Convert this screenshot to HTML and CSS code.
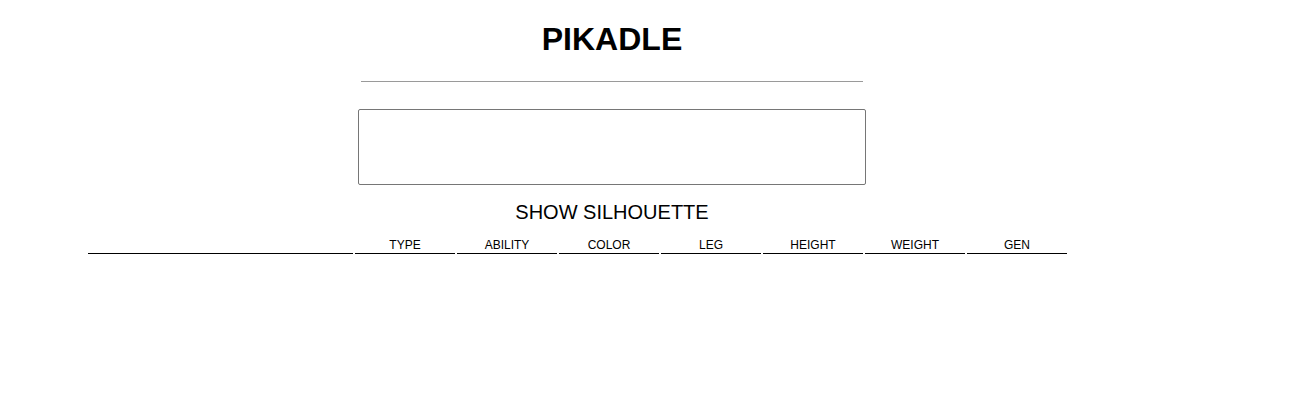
FILE: index.html
```html
<!DOCTYPE html>
<html lang="en">
<head>
<meta charset="utf-8">
<title>Pikadle</title>
<link rel="stylesheet" href="styles.css">
</head>
<body>
<div class="app">
  <h1 class="title">PIKADLE</h1>
  <hr class="divider">
  <div class="guess-box"></div>
  <div class="silhouette">SHOW SILHOUETTE</div>
  <div class="header-row">
    <div class="cell cell-name"></div>
    <div class="cell">TYPE</div>
    <div class="cell">ABILITY</div>
    <div class="cell">COLOR</div>
    <div class="cell">LEG</div>
    <div class="cell">HEIGHT</div>
    <div class="cell">WEIGHT</div>
    <div class="cell">GEN</div>
  </div>
</div>
</body>
</html>
```
FILE: styles.css
```css
html, body {
  margin: 0;
  padding: 0;
  background: #ffffff;
}

body {
  font-family: "Liberation Sans", Arial, sans-serif;
  color: #000000;
}

.app {
  width: 1224px;
  display: flex;
  flex-direction: column;
  align-items: center;
}

.title {
  margin: 21px 0 0;
  font-size: 32px;
  line-height: 37px;
  font-weight: bold;
}

.divider {
  width: 502px;
  height: 0;
  margin: 23px 0 0;
  border: 0;
  border-top: 1px solid #9a9a9a;
}

.guess-box {
  width: 508px;
  height: 76px;
  margin-top: 27px;
  box-sizing: border-box;
  border: 1px solid #767676;
  border-radius: 2px;
}

.silhouette {
  margin-top: 16px;
  font-size: 20px;
  line-height: 23px;
}

.header-row {
  align-self: flex-start;
  margin: 13px 0 0 88px;
  display: grid;
  grid-template-columns: 265px repeat(7, 100px);
  column-gap: 2px;
}

.cell {
  font-size: 12px;
  line-height: 14px;
  text-align: center;
  padding: 1px 0;
  border-bottom: 1px solid #000000;
}
```
